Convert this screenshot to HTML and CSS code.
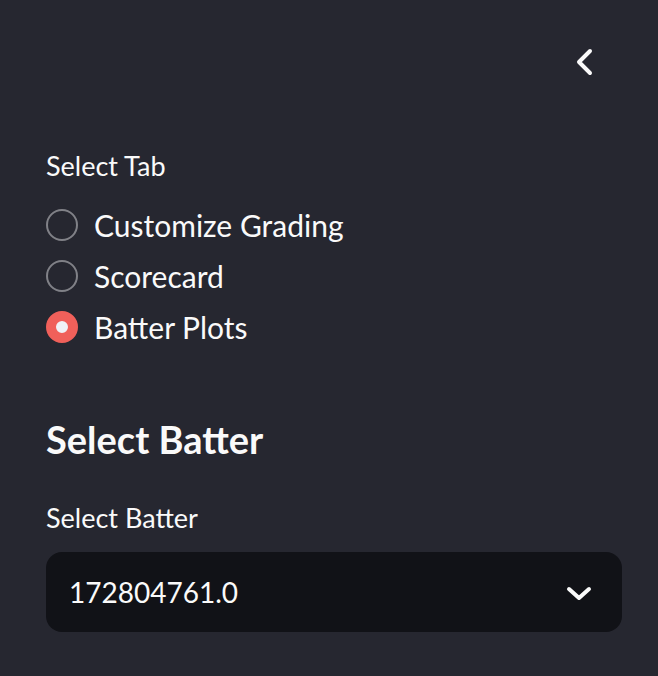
FILE: index.html
```html
<!DOCTYPE html>
<html>
<head>
<meta charset="utf-8">
<link rel="stylesheet" href="styles.css">
</head>
<body>
<aside class="sidebar">
  <div class="sidebar-header">
    <button class="collapse-btn" aria-label="Collapse sidebar">
      <svg width="24" height="30" viewBox="0 0 24 30"><path d="M18 4 L7 15 L18 26" fill="none" stroke="#fafafa" stroke-width="4" stroke-linecap="round" stroke-linejoin="round"/></svg>
    </button>
  </div>
  <div class="widget widget-tabs">
    <div class="widget-label">Select Tab</div>
    <div class="radio-group">
      <label class="radio"><span class="radio-circle"></span><span class="radio-text">Customize Grading</span></label>
      <label class="radio"><span class="radio-circle"></span><span class="radio-text">Scorecard</span></label>
      <label class="radio"><span class="radio-circle checked"></span><span class="radio-text">Batter Plots</span></label>
    </div>
  </div>
  <h2 class="heading">Select Batter</h2>
  <div class="widget widget-batter">
    <div class="widget-label">Select Batter</div>
    <div class="select">
      <span class="select-value">172804761.0</span>
      <svg class="select-arrow" width="26" height="16" viewBox="0 0 26 16"><path d="M3 3 L13 12 L23 3" fill="none" stroke="#fafafa" stroke-width="4" stroke-linecap="round" stroke-linejoin="round"/></svg>
    </div>
  </div>
</aside>
</body>
</html>
```
FILE: styles.css
```css
html, body {
  margin: 0;
  padding: 0;
  background: #262730;
}
body {
  font-family: "Lato", "Noto Sans", sans-serif;
  color: #fafafa;
}
.sidebar {
  width: 658px;
  height: 676px;
  box-sizing: border-box;
  padding: 0 36px 0 46px;
  display: flex;
  flex-direction: column;
}
.sidebar-header {
  display: flex;
  justify-content: flex-end;
  padding-top: 47px;
  height: 30px;
}
.collapse-btn {
  background: none;
  border: none;
  padding: 0;
  margin-right: 26px;
  width: 24px;
  height: 30px;
  display: flex;
}
.widget-label {
  font-size: 27px;
  line-height: 36px;
}
.widget-tabs .widget-label {
  margin-top: 71px;
}
.radio-group {
  display: flex;
  flex-direction: column;
  margin-top: 15px;
}
.radio {
  display: flex;
  align-items: center;
  height: 51px;
}
.radio-circle {
  width: 32px;
  height: 32px;
  box-sizing: border-box;
  border-radius: 50%;
  border: 2px solid #808187;
  margin-right: 16px;
  flex: none;
}
.radio-circle.checked {
  border: 10px solid #f0605a;
  background: #f0f2f6;
}
.radio-text {
  font-size: 30px;
}
.heading {
  font-size: 38px;
  font-weight: 700;
  line-height: 48px;
  margin: 63px 0 0 0;
}
.widget-batter .widget-label {
  margin-top: 37px;
}
.select {
  margin-top: 16px;
  height: 80px;
  background: #111217;
  border-radius: 16px;
  display: flex;
  align-items: center;
  justify-content: space-between;
  padding: 0 30px 0 23px;
}
.select-value {
  font-size: 28px;
}
.select-arrow {
  margin-top: 4px;
}
```
